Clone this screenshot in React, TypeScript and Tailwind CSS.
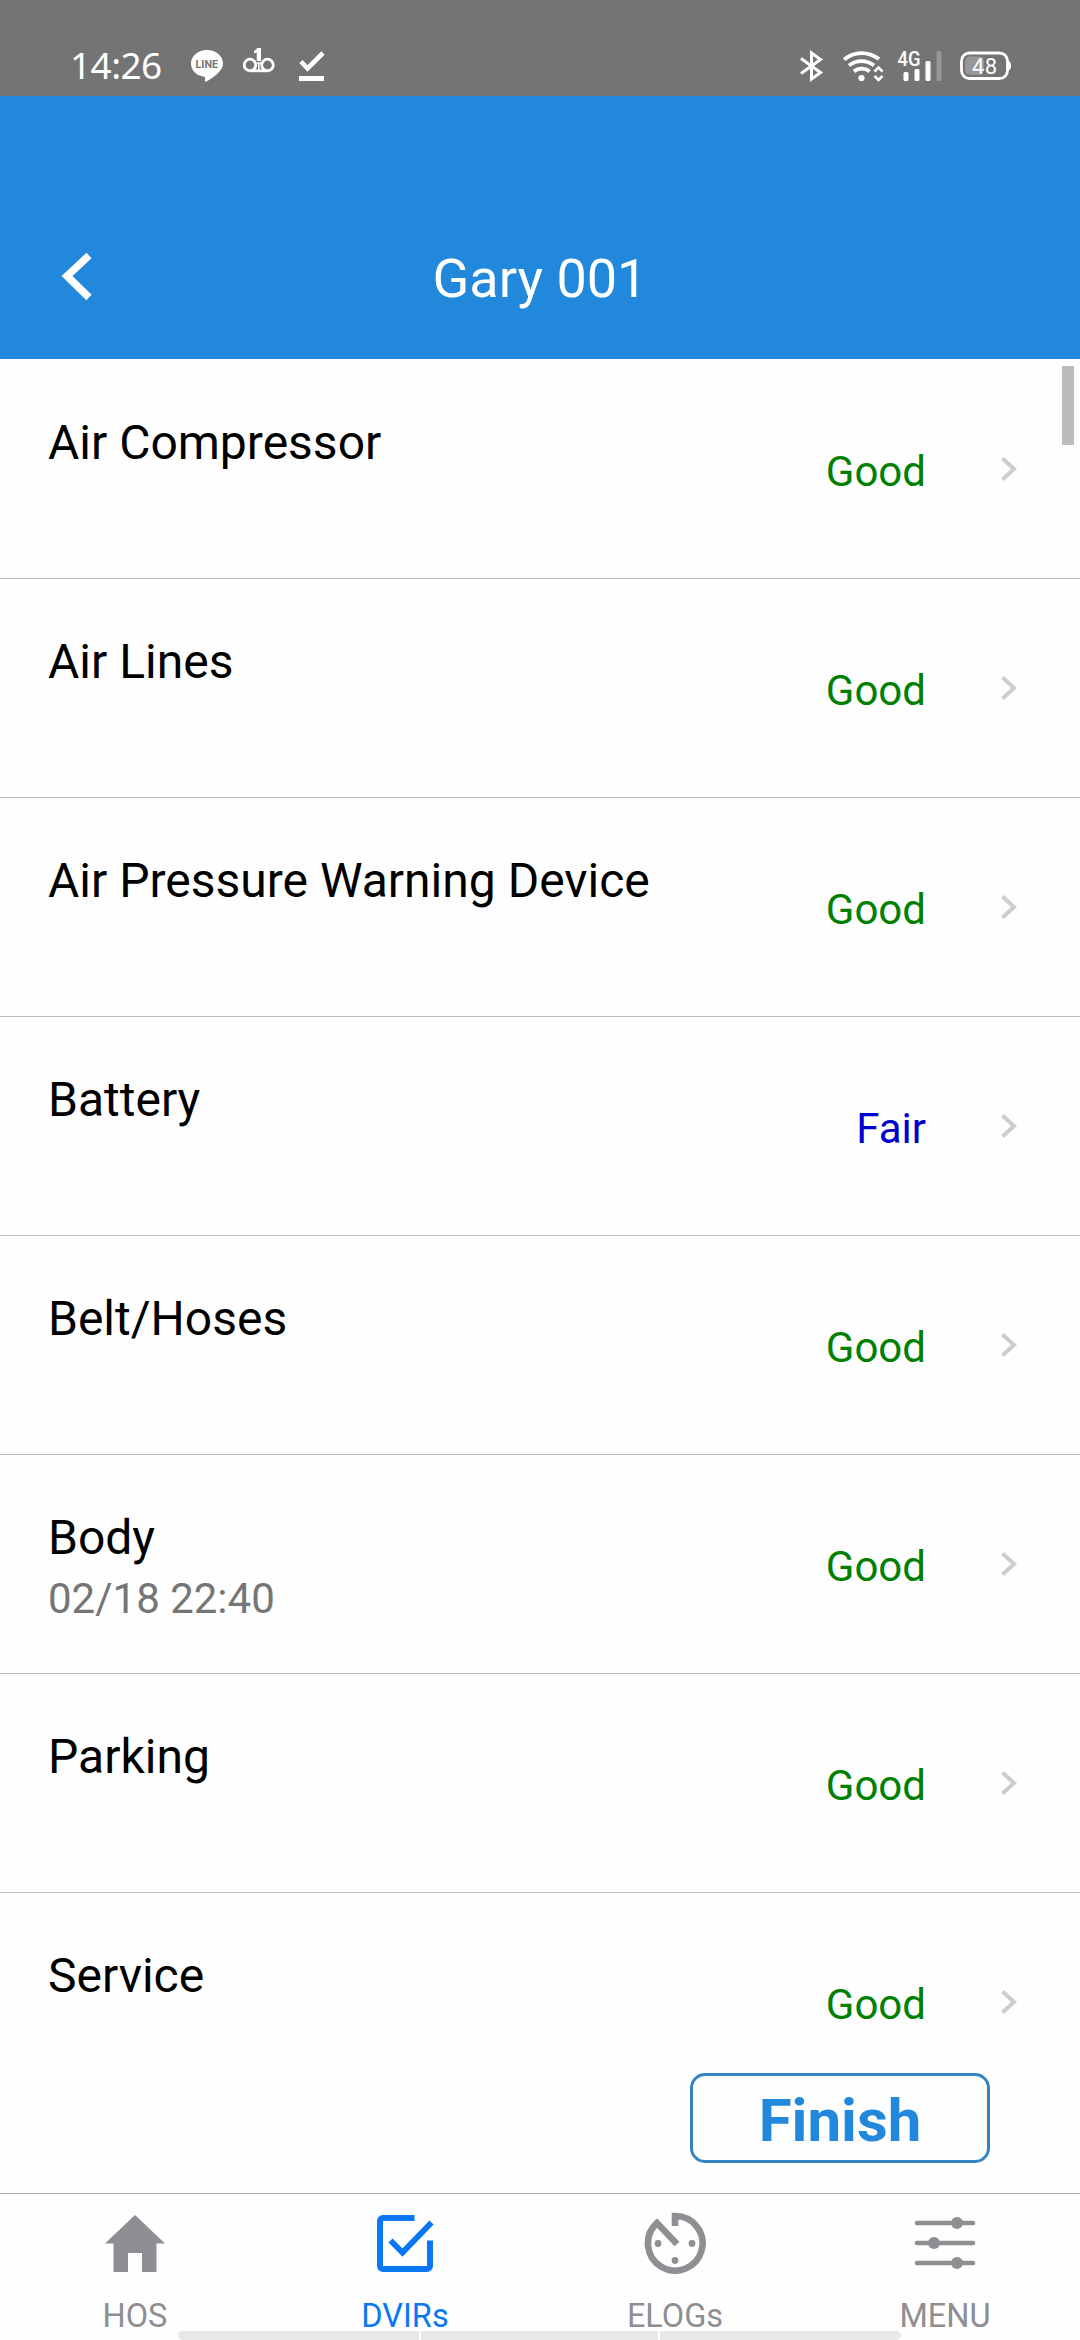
type Item = { name: string; status: "Good" | "Fair"; time?: string };

const items: Item[] = [
  { name: "Air Compressor", status: "Good" },
  { name: "Air Lines", status: "Good" },
  { name: "Air Pressure Warning Device", status: "Good" },
  { name: "Battery", status: "Fair" },
  { name: "Belt/Hoses", status: "Good" },
  { name: "Body", status: "Good", time: "02/18 22:40" },
  { name: "Parking", status: "Good" },
  { name: "Service", status: "Good" },
];

function LineIcon() {
  return (
    <svg width="34" height="34" viewBox="0 0 34 34">
      <path d="M17 1C8 1 1 7 1 14.500c0 7 5.500 12.100 13 13.200 1.400.3 1.200 1.200.9 3.400-.1 1.200.4 1.900 1.400 1.500C20 30.500 33 23 33 14.500 33 7 26 1 17 1z" fill="#fff" />
      <text x="16.800" y="19" textAnchor="middle" fontSize="10.500" fontWeight="700" fill="#747474" textLength="22.500" lengthAdjust="spacingAndGlyphs">LINE</text>
    </svg>
  );
}

function VoicemailIcon() {
  return (
    <svg width="34" height="26" viewBox="0 0 34 26" fill="none" stroke="#fff">
      <circle cx="8" cy="18" r="5.800" strokeWidth="2.800" />
      <circle cx="25.500" cy="18" r="5.800" strokeWidth="2.800" />
      <path d="M8 23.800h18" strokeWidth="2.800" />
      <path d="M12 4L15.500 1H19v13h-4.200V5.400L12 6.400z" fill="#fff" stroke="none" />
      <path d="M15 16h4M16.800 16v7" strokeWidth="1.600" />
    </svg>
  );
}

function DoneIcon() {
  return (
    <svg width="26" height="30" viewBox="0 0 26 30" fill="none" stroke="#fff">
      <path d="M2 10.500l6.500 7L24 2" strokeWidth="4.600" />
      <path d="M0 27.500h25" strokeWidth="5" />
    </svg>
  );
}

function BluetoothIcon() {
  return (
    <svg width="24" height="32" viewBox="0 0 24 32" fill="none" stroke="#fff" strokeWidth="3">
      <path d="M1 8.500L20.500 22.500l-9 6.500V3l9 6.500L1 23.500" />
    </svg>
  );
}

function WifiIcon() {
  return (
    <svg width="42" height="32" viewBox="0 0 42 32" fill="none" stroke="#fff" strokeWidth="3.800">
      <path d="M2 9.500C12.500 1 26 1 37 9" />
      <path d="M7 15.500c7.500-5.800 17.500-5.800 25 0" />
      <path d="M12 21.500c4.500-3.800 11-3.800 15.500 0" />
      <circle cx="19.500" cy="28" r="3.100" fill="#fff" stroke="none" />
      <path d="M32.500 21.500l4-4 4 4M32.500 26l4 4 4-4" strokeWidth="2.600" />
    </svg>
  );
}

function SignalIcon() {
  return (
    <svg width="46" height="42" viewBox="0 -8 46 42" fill="#fff">
      <text x="0.500" y="16.500" fontSize="20" fontWeight="500" textLength="23" lengthAdjust="spacingAndGlyphs">4G</text>
      <rect x="6.500" y="23" width="5" height="9" rx="1.500" />
      <rect x="17.500" y="20" width="5" height="12" rx="1.500" />
      <rect x="28.500" y="12" width="5" height="20" rx="1.500" />
      <rect x="39.500" y="2" width="5" height="30" rx="1.500" opacity=".25" />
    </svg>
  );
}

function BatteryIcon() {
  return (
    <svg width="52" height="30" viewBox="0 0 52 30">
      <rect x="1.500" y="2" width="46" height="25.500" rx="8" fill="none" stroke="#fff" strokeWidth="2.800" />
      <rect x="5" y="5.500" width="19" height="18.500" rx="5" fill="#fff" opacity=".25" />
      <path d="M48 9.500c2.600 1.200 3 3 3 5.300s-.4 4-3 5.200z" fill="#fff" />
      <text x="24.500" y="22.600" textAnchor="middle" fontSize="22" fill="#fff" textLength="25">48</text>
    </svg>
  );
}

function HomeIcon() {
  return (
    <svg width="62" height="62" viewBox="0 0 62 62" fill="currentColor">
      <path d="M31 3l30 28.500h-8.500V60H38V41H24v19H9.500V31.500H1z" />
    </svg>
  );
}

function ChecklistIcon() {
  return (
    <svg width="62" height="62" viewBox="0 0 62 62" fill="none" stroke="currentColor" strokeWidth="6">
      <path d="M40.500 6H9a3 3 0 0 0-3 3v45a3 3 0 0 0 3 3h44a3 3 0 0 0 3-3V28.500" />
      <path d="M16.500 28.500L28.500 40.500 57.500 10.500" strokeWidth="5.800" />
    </svg>
  );
}

function TimerIcon() {
  return (
    <svg width="62" height="62" viewBox="0 0 62 62" fill="none" stroke="currentColor">
      <path d="M31 14V4a27.300 27.300 0 1 1-18 7L33 32" strokeWidth="6.600" />
      <g fill="currentColor" stroke="none">
        <circle cx="14" cy="31.500" r="3.400" />
        <circle cx="48" cy="31.500" r="3.400" />
        <circle cx="31" cy="48.500" r="3.400" />
      </g>
    </svg>
  );
}

function SlidersIcon() {
  return (
    <svg width="62" height="62" viewBox="0 0 62 62" fill="currentColor" stroke="currentColor" strokeWidth="4.600" strokeLinecap="round">
      <path d="M3 11h56M3 31h56M3 51h56" />
      <g stroke="none">
        <circle cx="43" cy="11" r="6" />
        <circle cx="20" cy="31" r="6" />
        <circle cx="43" cy="51" r="6" />
      </g>
    </svg>
  );
}

const tabs = [
  { label: "HOS", icon: <HomeIcon />, active: false },
  { label: "DVIRs", icon: <ChecklistIcon />, active: true },
  { label: "ELOGs", icon: <TimerIcon />, active: false },
  { label: "MENU", icon: <SlidersIcon />, active: false },
];

function StatusBar() {
  return (
    <div className="flex h-24 shrink-0 items-start bg-[#747474] text-white">
      <span className="mt-[42px] ml-[70px] w-[94px] whitespace-nowrap font-['Noto_Sans',sans-serif] text-[37px] leading-[46px] tracking-[-0.6px]">14:26</span>
      <div className="mt-[49px] ml-[26px]"><LineIcon /></div>
      <div className="mt-[47px] ml-[18px]"><VoicemailIcon /></div>
      <div className="mt-[51px] ml-[23px]"><DoneIcon /></div>
      <div className="mt-[50px] ml-auto"><BluetoothIcon /></div>
      <div className="mt-[50px] ml-[18px]"><WifiIcon /></div>
      <div className="mt-[41px] ml-[13px]"><SignalIcon /></div>
      <div className="mt-[51px] mr-[68px] ml-[17px]"><BatteryIcon /></div>
    </div>
  );
}

function Row({ item }: { item: Item }) {
  return (
    <li className="flex h-[219px] shrink-0 border-b border-[#bcbbc1] pl-12">
      <div className="flex-1 pt-[55px]">
        <div className="text-[48px] leading-[56px] text-black">{item.name}</div>
        {item.time && <div className="mt-2 text-[42px] leading-[49px] text-[#757575]">{item.time}</div>}
      </div>
      <div className={"pt-[87px] text-[42px] leading-[49px] " + (item.status === "Good" ? "text-[#008000]" : "text-[#0000cd]")}>
        {item.status}
      </div>
      <svg className="mt-[96px] mr-[62px] ml-[74px]" width="18" height="26" viewBox="0 0 18 26" fill="none" stroke="#cdcdcd" strokeWidth="4">
        <path d="M2.500 2.500L14 13 2.500 23.500" />
      </svg>
    </li>
  );
}

export default function App() {
  return (
    <div className="relative flex h-[2340px] w-[1080px] flex-col overflow-hidden bg-[#fefefe] font-['Roboto',sans-serif]">
      <StatusBar />
      <header className="grid h-[263px] shrink-0 grid-cols-[1fr_auto_1fr] items-start bg-[#2288dc] text-white">
        <svg className="mt-[155px] ml-[60px]" width="34" height="52" viewBox="0 0 34 52" fill="none" stroke="#fff" strokeWidth="7.500">
          <path d="M29 4.500L7 25 29 46.500" />
        </svg>
        <h1 className="mt-[151px] text-[54px] leading-[63px]">Gary 001</h1>
      </header>
      <main className="relative flex h-[1834px] shrink-0 flex-col overflow-hidden pt-px">
        <ul className="flex flex-col">
          {items.map((item) => (
            <Row key={item.name} item={item} />
          ))}
        </ul>
        <div className="absolute top-[7px] right-[6px] h-[79px] w-3 bg-[#bcbcbc]" />
        <div className="absolute inset-x-0 bottom-0 flex h-[140px] items-start justify-end bg-[#fefefe] pr-[90px]">
          <button className="mt-5 h-[90px] w-[300px] rounded-[15px] border-3 border-[#3583c0] pt-1.5 text-[60px] leading-[70px] font-bold text-[#2288dc]">Finish</button>
        </div>
      </main>
      <nav className="grid flex-1 grid-cols-4 border-t border-[#a7a7aa]">
        {tabs.map((tab) => (
          <div key={tab.label} className={"flex flex-col items-center pt-[18px] " + (tab.active ? "text-[#0a78f5]" : "text-[#8e8e93]")}>
            {tab.icon}
            <span className="mt-[23px] text-[32.5px] leading-[39px]">{tab.label}</span>
          </div>
        ))}
      </nav>
      <div className="absolute bottom-0 left-[178px] flex h-[9px] w-[723px] gap-0.5 overflow-hidden rounded-l-full rounded-r-full">
        <div className="w-[241px] bg-[#e8e8e8]" />
        <div className="w-[237px] bg-[#e8e8e8]" />
        <div className="flex-1 bg-[#e8e8e8]" />
      </div>
    </div>
  );
}
